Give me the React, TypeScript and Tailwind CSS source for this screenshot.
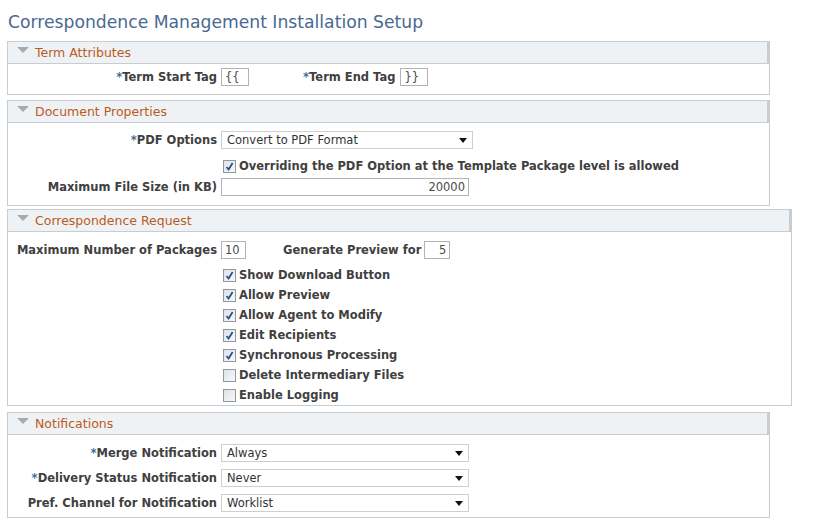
import React from "react"

/* ------------------------------------------------------------------ */
/*  Small bits                                                          */
/* ------------------------------------------------------------------ */

const font = { fontFamily: '"DejaVu Sans", Verdana, sans-serif' }

function Req() {
  return <span className="text-[#3b6ea5]">*</span>
}

function Label({
  children,
  required,
  className = "",
}: {
  children: React.ReactNode
  required?: boolean
  className?: string
}) {
  return (
    <span
      className={`block whitespace-nowrap text-[11.5px] font-bold leading-[18px] text-[#404040] ${className}`}
    >
      {required && <Req />}
      {children}
    </span>
  )
}

function TextBox({
  value,
  className = "",
  right,
}: {
  value: string
  className?: string
  right?: boolean
}) {
  return (
    <div
      className={`flex h-[18px] items-center border border-[#b3b3b3] bg-white px-[3px] text-[11.5px] leading-[16px] text-[#4a4a4a] ${
        right ? "justify-end" : ""
      } ${className}`}
    >
      {value}
    </div>
  )
}

function Select({ value, className = "" }: { value: string; className?: string }) {
  return (
    <div
      className={`flex h-[18px] items-center justify-between border border-[#cfcfcf] bg-white pl-[5px] pr-[5px] text-[11.5px] leading-[16px] text-[#333] ${className}`}
    >
      <span>{value}</span>
      <svg width="8" height="5" viewBox="0 0 8 5">
        <path d="M0 0h8L4 5z" fill="#111" />
      </svg>
    </div>
  )
}

function Box({ checked }: { checked: boolean }) {
  return (
    <div className="flex h-[13px] w-[13px] shrink-0 items-center justify-center border border-[#8e98a3] bg-gradient-to-br from-[#dfe3e7] to-[#f7f8f9]">
      {checked && (
        <svg width="9" height="9" viewBox="0 0 9 9">
          <path
            d="M1.5 5 L3.6 7.4 L7.6 1"
            fill="none"
            stroke="#2c4f8c"
            strokeWidth="1.8"
          />
        </svg>
      )}
    </div>
  )
}

function Check({ checked, label }: { checked: boolean; label: string }) {
  return (
    <div className="flex h-[20px] items-center pl-[215px]">
      <Box checked={checked} />
      <Label className="ml-[3px]">{label}</Label>
    </div>
  )
}

function Section({
  title,
  children,
  wide,
  className = "",
}: {
  title: string
  children: React.ReactNode
  wide?: boolean
  className?: string
}) {
  return (
    <div
      className={`border border-[#c9cdd1] ${wide ? "w-[785px]" : "w-[763px]"} ${className}`}
    >
      <div className="flex h-[22px] items-start border-b border-r-2 border-[#c9cdd1] bg-[#eff2f4]">
        <svg width="12" height="6" viewBox="0 0 12 6" className="ml-[9px] mt-[5px]">
          <path d="M0 0h12L6 6z" fill="#a7abaf" />
        </svg>
        <span className="ml-[6px] mt-[3px] text-[12.5px] leading-[16px] text-[#bb5a23]">
          {title}
        </span>
      </div>
      {children}
    </div>
  )
}

function Row({
  label,
  required,
  children,
  className = "",
}: {
  label: string
  required?: boolean
  children: React.ReactNode
  className?: string
}) {
  return (
    <div className={`flex items-center ${className}`}>
      <div className="flex w-[209px] justify-end">
        <Label required={required}>{label}</Label>
      </div>
      <div className="ml-[4px] flex items-center">{children}</div>
    </div>
  )
}

/* ------------------------------------------------------------------ */
/*  Page                                                                */
/* ------------------------------------------------------------------ */

export default function App() {
  return (
    <div className="h-[521px] w-[817px] overflow-hidden bg-white pl-[7px]" style={font}>
      <h1 className="pl-[1px] pt-[11px] text-[17.2px] leading-[22px] text-[#4a6891]">
        Correspondence Management Installation Setup
      </h1>

      {/* Term Attributes */}
      <Section title="Term Attributes" className="mt-[8px]">
        <Row label="Term Start Tag" required className="pb-[8px] pt-[4px]">
          <TextBox value="{{" className="w-[28px]" />
          <Label required className="ml-[54px]">
            Term End Tag
          </Label>
          <TextBox value="}}" className="ml-[5px] w-[28px]" />
        </Row>
      </Section>

      {/* Document Properties */}
      <Section title="Document Properties" className="mt-[5px]">
        <Row label="PDF Options" required className="pt-[8px]">
          <Select value="Convert to PDF Format" className="w-[252px]" />
        </Row>
        <div className="flex h-[29px] items-center pl-[215px] pt-[5px]">
          <Box checked />
          <Label className="ml-[3px]">
            Overriding the PDF Option at the Template Package level is allowed
          </Label>
        </div>
        <Row label="Maximum File Size (in KB)" className="pb-[9px]">
          <TextBox value="20000" right className="w-[248px]" />
        </Row>
      </Section>

      {/* Correspondence Request */}
      <Section title="Correspondence Request" wide className="mt-[3px]">
        <Row label="Maximum Number of Packages" className="pb-[6px] pt-[9px]">
          <TextBox value="10" className="w-[25px]" />
          <Label className="ml-[37px]">Generate Preview for</Label>
          <TextBox value="5" right className="ml-[3px] w-[26px]" />
        </Row>
        <Check checked label="Show Download Button" />
        <Check checked label="Allow Preview" />
        <Check checked label="Allow Agent to Modify" />
        <Check checked label="Edit Recipients" />
        <Check checked label="Synchronous Processing" />
        <Check checked={false} label="Delete Intermediary Files" />
        <Check checked={false} label="Enable Logging" />
      </Section>

      {/* Notifications */}
      <Section title="Notifications" className="mt-[6px]">
        <div className="flex flex-col gap-[7px] pb-[5px] pt-[9px]">
          <Row label="Merge Notification" required>
            <Select value="Always" className="w-[248px]" />
          </Row>
          <Row label="Delivery Status Notification" required>
            <Select value="Never" className="w-[248px]" />
          </Row>
          <Row label="Pref. Channel for Notification">
            <Select value="Worklist" className="w-[248px]" />
          </Row>
        </div>
      </Section>
    </div>
  )
}
